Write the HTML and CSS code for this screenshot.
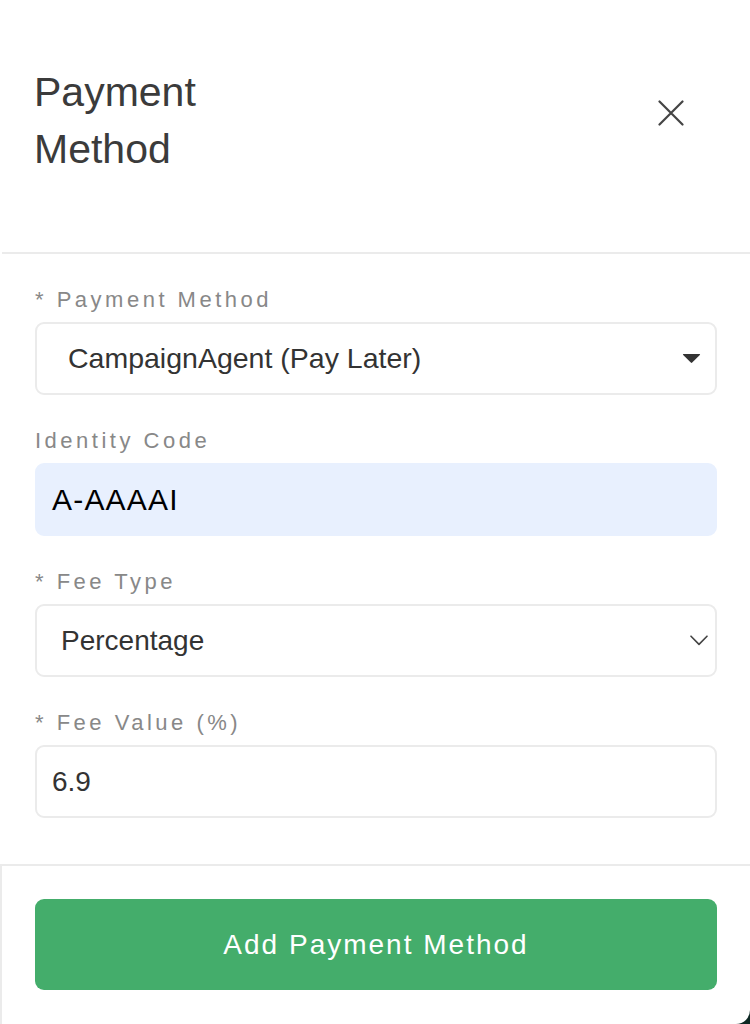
FILE: index.html
```html
<!DOCTYPE html>
<html lang="en">
<head>
<meta charset="utf-8">
<title>Payment Method</title>
<link rel="stylesheet" href="styles.css">
</head>
<body>
<div class="panel">
  <header class="head">
    <h1 class="title">Payment Method</h1>
    <button class="close" type="button" aria-label="Close">
      <svg width="26" height="26" viewBox="0 0 26 26" fill="none" stroke="#444" stroke-width="2.2" stroke-linecap="round"><path d="M1.5 1.5 L24.5 24.5 M24.5 1.5 L1.5 24.5"/></svg>
    </button>
  </header>
  <form class="form">
    <div class="field">
      <label class="label">* Payment Method</label>
      <div class="control custom">
        <span>CampaignAgent (Pay Later)</span>
        <svg class="caret" width="19" height="11" viewBox="0 0 19 11"><path d="M1.5 1 H17.5 Q18.6 1 17.8 1.9 L10.2 9.6 Q9.5 10.3 8.8 9.6 L1.2 1.9 Q0.4 1 1.5 1 Z" fill="#333"/></svg>
      </div>
    </div>
    <div class="field">
      <label class="label">Identity Code</label>
      <div class="control autofill"><span>A-AAAAI</span></div>
    </div>
    <div class="field">
      <label class="label">* Fee Type</label>
      <div class="control native">
        <span>Percentage</span>
        <svg class="chev" width="18" height="11" viewBox="0 0 18 11" fill="none" stroke="#444" stroke-width="1.6" stroke-linecap="round" stroke-linejoin="round"><path d="M1 1.2 L9 9.4 L17 1.2"/></svg>
      </div>
    </div>
    <div class="field">
      <label class="label">* Fee Value (%)</label>
      <div class="control plain"><span>6.9</span></div>
    </div>
  </form>
  <footer class="foot">
    <button class="submit" type="button">Add Payment Method</button>
  </footer>
</div>
</body>
</html>
```
FILE: styles.css
```css
* { box-sizing: border-box; }
html, body { margin: 0; padding: 0; }
body {
  background: #0d2823;
  font-family: "Liberation Sans", Arial, Helvetica, sans-serif;
  width: 750px;
  height: 1024px;
  overflow: hidden;
}
.panel {
  background: #fff;
  width: 750px;
  height: 1024px;
  border-bottom-right-radius: 14px;
  display: flex;
  flex-direction: column;
}
.head {
  display: flex;
  justify-content: space-between;
  align-items: flex-start;
  padding: 64px 66px 74px 32px;
  border-bottom: 2px solid #ebebeb;
  margin-left: 2px;
}
.title {
  margin: 0;
  font-weight: normal;
  font-size: 41px;
  line-height: 57px;
  color: #3b3b3b;
  max-width: 220px;
}
.close {
  border: 0;
  background: none;
  padding: 0;
  margin-top: 36px;
  width: 26px;
  height: 26px;
  display: flex;
}
.form {
  padding: 31px 33px 46px 35px;
  display: flex;
  flex-direction: column;
  gap: 31px;
}
.field {
  display: flex;
  flex-direction: column;
  gap: 7px;
}
.label {
  font-size: 22px;
  line-height: 30px;
  letter-spacing: 3.5px;
  color: #888;
}
.control {
  height: 73px;
  border: 2px solid #ebebeb;
  border-radius: 9px;
  display: flex;
  align-items: center;
  justify-content: space-between;
  font-size: 28px;
  color: #333;
}
.custom { padding: 0 14px 0 31px; font-size: 28.5px; }
.autofill {
  background: #e8f0fe;
  border-color: #e8f0fe;
  color: #000;
  padding: 0 15px;
  font-size: 30px;
  letter-spacing: 1.2px;
}
.native { padding: 0 7px 0 24px; }
.plain { padding: 0 15px; }
.foot {
  flex: 1;
  border-top: 2px solid #ebebeb;
  border-left: 2px solid #ebebeb;
  padding: 33px 33px 0 33px;
}
.submit {
  width: 100%;
  height: 91px;
  border: 0;
  border-radius: 9px;
  background: #44ad6b;
  color: #fff;
  font-family: "Liberation Sans", Arial, Helvetica, sans-serif;
  font-size: 28px;
  letter-spacing: 2px;
}
```
